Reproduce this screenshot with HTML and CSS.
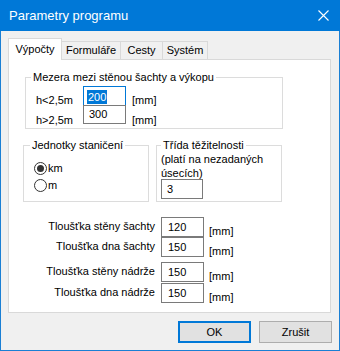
FILE: index.html
```html
<!DOCTYPE html>
<html lang="cs">
<head>
<meta charset="utf-8">
<title>Parametry programu</title>
<link rel="stylesheet" href="styles.css">
</head>
<body>
<div class="window">
  <div class="titlebar">
    <span class="title">Parametry programu</span>
    <svg class="close" width="11" height="11" viewBox="0 0 11 11"><path d="M0.5 0.5 L10.5 10.5 M10.5 0.5 L0.5 10.5" stroke="#fff" stroke-width="1.1" fill="none"/></svg>
  </div>
  <div class="client">
    <div class="tabs">
      <div class="tab active t1">Výpočty</div>
      <div class="tab t2">Formuláře</div>
      <div class="tab t3">Cesty</div>
      <div class="tab t4">Systém</div>
    </div>
    <div class="panel">
      <div class="group g1">
        <span class="legend">Mezera mezi stěnou šachty a výkopu</span>
        <div class="hrow r1"><span class="hlabel">h&lt;2,5m</span><span class="field focus"><span class="sel">200</span></span><span class="unit">[mm]</span></div>
        <div class="hrow r2"><span class="hlabel">h&gt;2,5m</span><span class="field">300</span><span class="unit">[mm]</span></div>
      </div>
      <div class="grow">
        <div class="group g2">
          <span class="legend">Jednotky staničení</span>
          <div class="radio"><svg width="13" height="13" viewBox="0 0 13 13"><circle cx="6.5" cy="6.5" r="6" fill="#fff" stroke="#333" stroke-width="1"/><circle cx="6.5" cy="6.5" r="3.5" fill="#333"/></svg><span>km</span></div>
          <div class="radio r-m"><svg width="13" height="13" viewBox="0 0 13 13"><circle cx="6.5" cy="6.5" r="6" fill="#fff" stroke="#333" stroke-width="1"/></svg><span>m</span></div>
        </div>
        <div class="group g3">
          <span class="legend">Třída těžitelnosti</span>
          <div class="note">(platí na nezadaných<br>úsecích)</div>
          <div class="field f3">3</div>
        </div>
      </div>
      <div class="thick">
        <div class="trow ta"><span class="tlabel">Tloušťka stěny šachty</span><span class="field">120</span><span class="unit">[mm]</span></div>
        <div class="trow tb"><span class="tlabel">Tloušťka dna šachty</span><span class="field">150</span><span class="unit">[mm]</span></div>
        <div class="trow tc"><span class="tlabel">Tloušťka stěny nádrže</span><span class="field">150</span><span class="unit">[mm]</span></div>
        <div class="trow td"><span class="tlabel">Tloušťka dna nádrže</span><span class="field">150</span><span class="unit">[mm]</span></div>
      </div>
    </div>
    <div class="buttons">
      <button class="btn default">OK</button>
      <button class="btn">Zrušit</button>
    </div>
  </div>
</div>
</body>
</html>
```
FILE: styles.css
```css
* { box-sizing: border-box; }
body {
  margin: 0;
  font-family: "Liberation Sans", Arial, sans-serif;
  font-size: 11px;
  color: #000;
}
.window {
  width: 340px;
  height: 351px;
  background: #f0f0f0;
  border: 1px solid #1a7fd4;
  border-top: 0;
  display: flex;
  flex-direction: column;
}
.titlebar {
  height: 31px;
  flex: none;
  margin: 0 -1px;
  background: #0078d7;
  color: #fff;
  display: flex;
  align-items: center;
  padding: 0 11px 0 9px;
  font-size: 13px;
}
.title { flex: 1; line-height: 31px; }
.close { display: block; }
.client {
  flex: 1;
  padding: 7px 7px 0 7px;
  display: flex;
  flex-direction: column;
}
.tabs {
  display: flex;
  align-items: flex-end;
  height: 21px;
  flex: none;
}
.tab {
  height: 18px;
  border: 1px solid #d9d9d9;
  border-bottom: 0;
  background: #f0f0f0;
  text-align: center;
  line-height: 17px;
  margin-left: -1px;
  white-space: nowrap;
}
.tab.active {
  height: 22px;
  margin-left: 0;
  margin-bottom: -1px;
  background: #fff;
  line-height: 21px;
  position: relative;
  z-index: 1;
}
.t1 { width: 54px; }
.t2 { width: 60px; }
.t3 { width: 43px; }
.t4 { width: 46px; }
.panel {
  width: 323px;
  height: 254px;
  flex: none;
  background: #fff;
  border: 1px solid #d9d9d9;
}
.group {
  position: relative;
  border: 1px solid #dcdcdc;
}
.legend {
  position: absolute;
  top: -8px;
  left: 5px;
  background: #fff;
  padding: 0 2px;
  line-height: 14px;
  white-space: nowrap;
}
.g1 {
  margin: 17px 0 0 16px;
  width: 258px;
  height: 52px;
  padding: 8px 0 0 10px;
}
.hrow { display: flex; align-items: flex-start; }
.r1 { height: 20px; }
.r2 { height: 19px; margin-top: -1px; }
.hlabel { width: 47px; padding-top: 7px; line-height: 14px; }
.r2 .hlabel, .r2 .unit { padding-top: 8px; }
.unit { margin-left: 6px; padding-top: 7px; line-height: 14px; }
.field {
  display: block;
  width: 43px;
  height: 20px;
  border: 1px solid #7a7a7a;
  background: #fff;
  padding-left: 5px;
  line-height: 18px;
  flex: none;
}
.r2 .field { height: 19px; line-height: 17px; }
.field.focus {
  border-color: #0078d7;
  padding: 3px 0 0 3px;
  line-height: 14px;
}
.sel {
  display: inline-block;
  vertical-align: top;
  background: #0078d7;
  color: #fff;
  padding: 0 1px;
  line-height: 14px;
}
.grow {
  display: flex;
  gap: 7px;
  margin: 16px 0 0 14px;
}
.g2, .g3 { width: 126px; height: 57px; }
.g2 { padding: 16px 0 0 10px; }
.g2 .legend { left: 6px; }
.g3 { padding: 4px 0 0 4px; }
.g3 .legend { left: 4px; }
.radio {
  display: flex;
  align-items: center;
  gap: 1px;
  height: 13px;
  line-height: 13px;
}
.radio svg { display: block; }
.r-m { margin-top: 4px; }
.note { line-height: 14px; padding-top: 2px; }
.f3 { width: 42px; margin-top: -1px; }
.thick { margin-top: 15px; }
.trow { display: flex; align-items: flex-start; height: 20px; }
.tc { margin-top: 5px; }
.td { margin-top: 1px; }
.tlabel {
  width: 146px;
  text-align: right;
  padding-top: 2px;
  line-height: 14px;
  white-space: nowrap;
}
.trow .field { margin-left: 6px; padding-left: 6px; }
.trow .unit { margin-left: 5px; }
.buttons {
  display: flex;
  justify-content: flex-end;
  gap: 8px;
  margin-top: 8px;
}
.btn {
  width: 73px;
  height: 22px;
  background: #e1e1e1;
  border: 1px solid #adadad;
  font: inherit;
  color: #000;
  padding: 0;
  margin: 0;
}
.btn.default { border: 2px solid #0078d7; }
```
